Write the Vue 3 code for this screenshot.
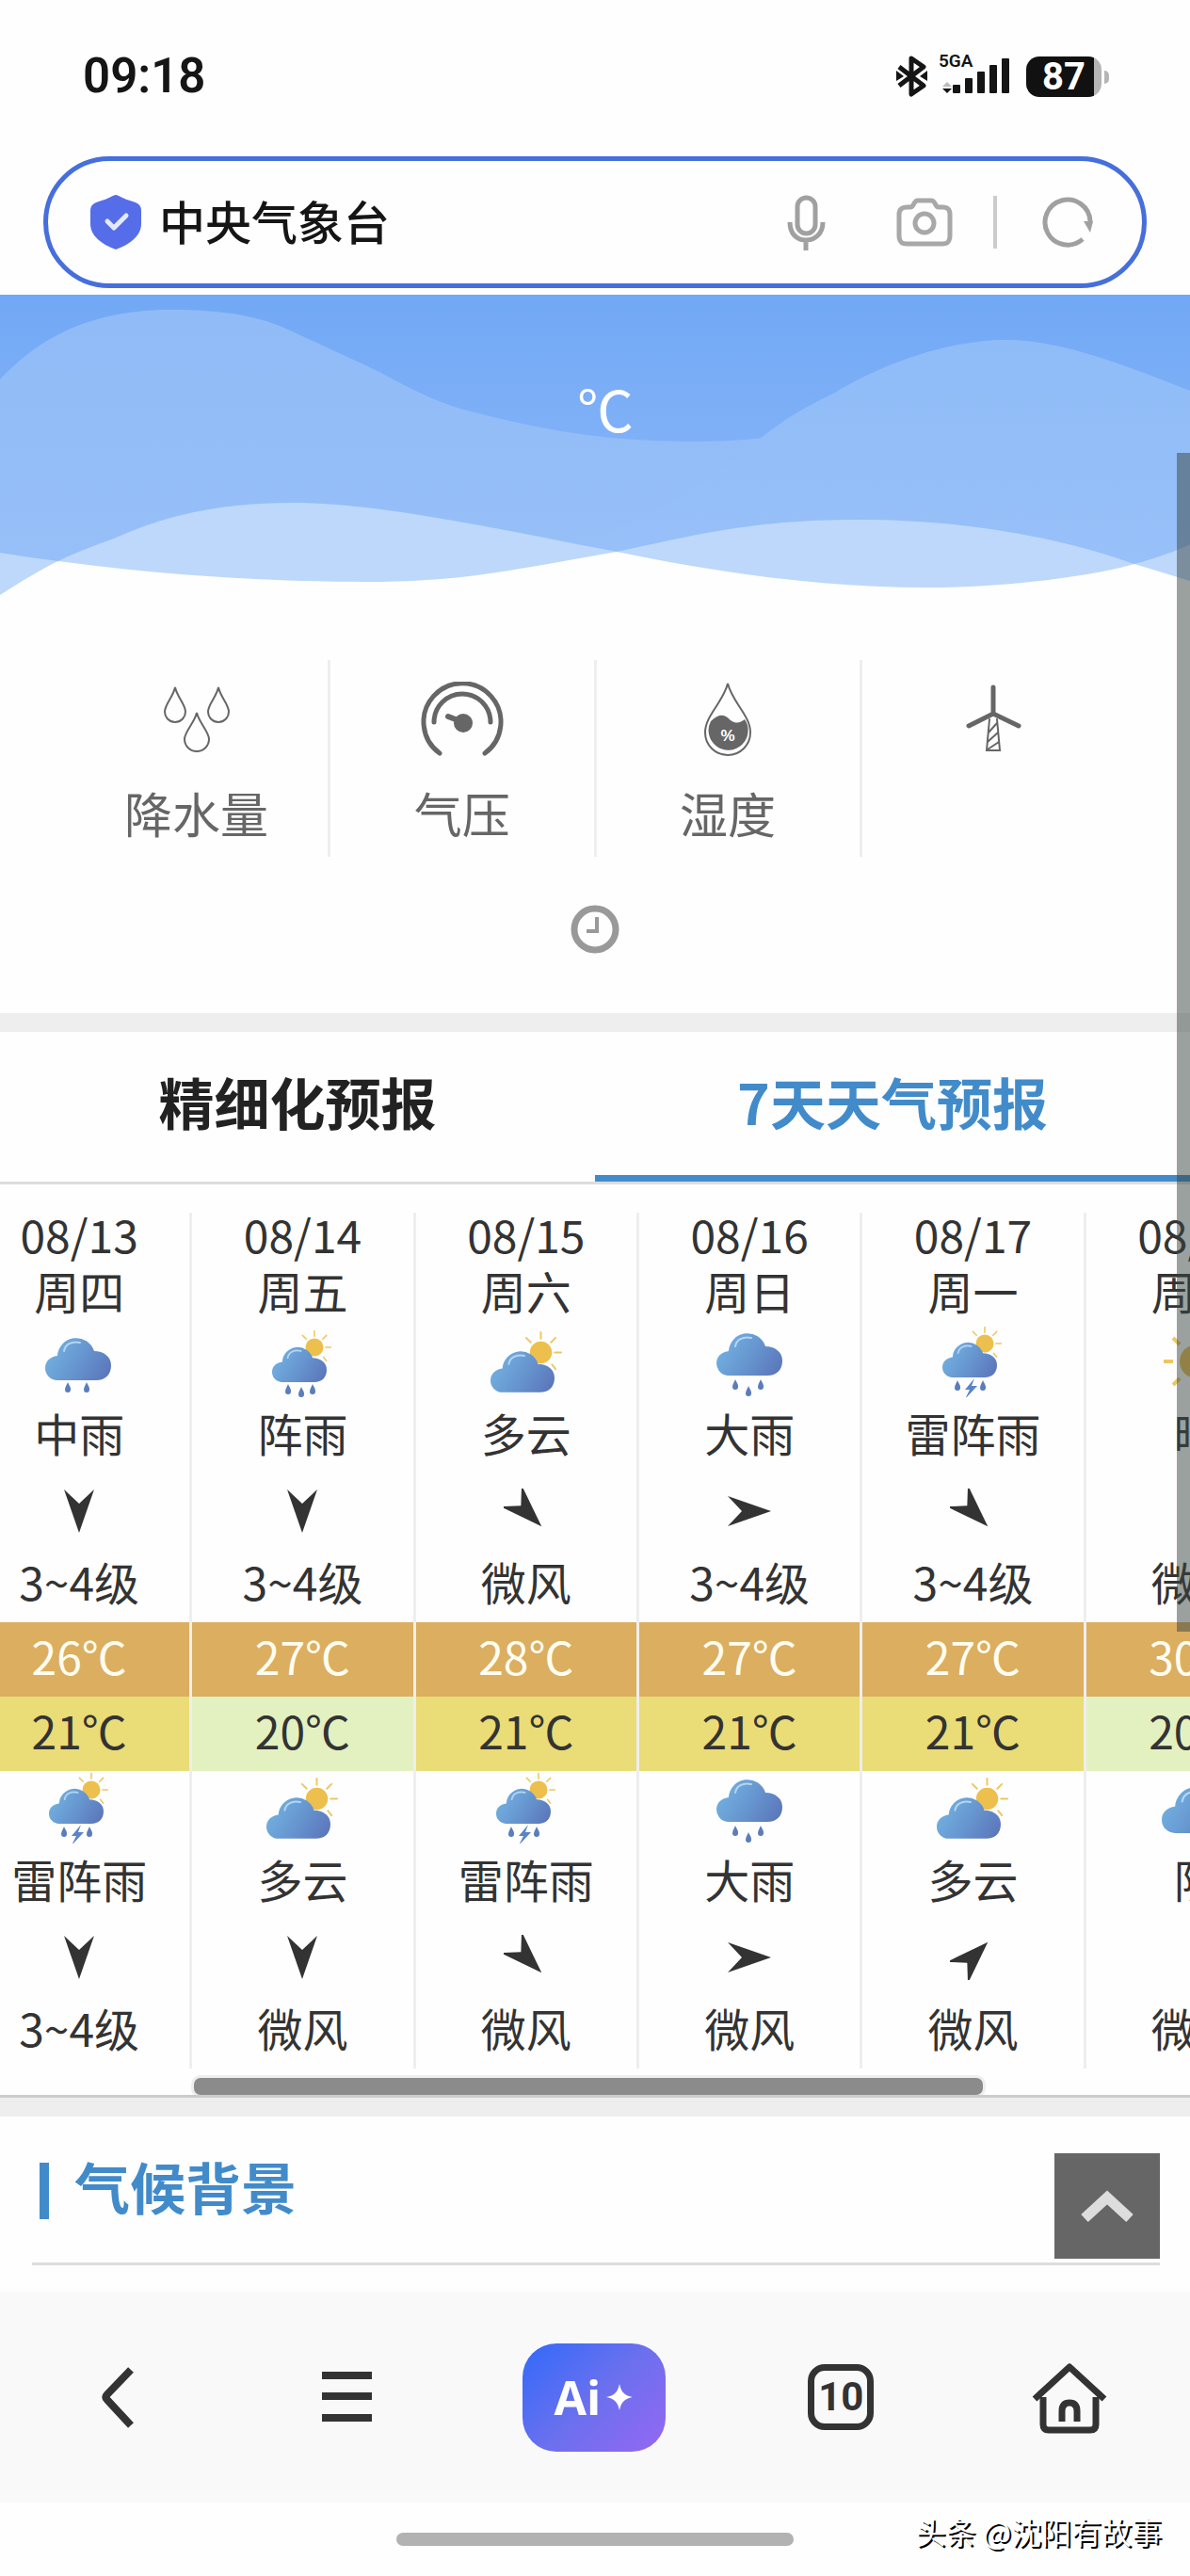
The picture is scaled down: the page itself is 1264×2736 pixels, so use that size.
<script setup>
import { ref } from 'vue'

const keyword = ref('中央气象台')
const activeTab = ref(1)
const tabs = ['精细化预报', '7天天气预报']

const metrics = [
	{ icon: 'drops', label: '降水量' },
	{ icon: 'gauge', label: '气压' },
	{ icon: 'humidity', label: '湿度' },
	{ icon: 'turbine', label: '' }
]

// wind arrows point down at 0 degrees
const days = [
	{
		date: '08/13',
		week: '周四',
		day: { icon: 'rain', text: '中雨', angle: 0, wind: '3~4级' },
		high: 26,
		low: 21,
		night: { icon: 'thunder', text: '雷阵雨', angle: 0, wind: '3~4级' }
	},
	{
		date: '08/14',
		week: '周五',
		day: { icon: 'shower', text: '阵雨', angle: 0, wind: '3~4级' },
		high: 27,
		low: 20,
		night: { icon: 'cloudy', text: '多云', angle: 0, wind: '微风' }
	},
	{
		date: '08/15',
		week: '周六',
		day: { icon: 'cloudy', text: '多云', angle: -45, wind: '微风' },
		high: 28,
		low: 21,
		night: { icon: 'thunder', text: '雷阵雨', angle: -45, wind: '微风' }
	},
	{
		date: '08/16',
		week: '周日',
		day: { icon: 'heavy', text: '大雨', angle: -90, wind: '3~4级' },
		high: 27,
		low: 21,
		night: { icon: 'heavy', text: '大雨', angle: -90, wind: '微风' }
	},
	{
		date: '08/17',
		week: '周一',
		day: { icon: 'thunder', text: '雷阵雨', angle: -45, wind: '3~4级' },
		high: 27,
		low: 21,
		night: { icon: 'cloudy', text: '多云', angle: -135, wind: '微风' }
	},
	{
		date: '08/18',
		week: '周二',
		day: { icon: 'sunny', text: '晴', angle: null, wind: '微风' },
		high: 30,
		low: 20,
		night: { icon: 'overcast', text: '阴', angle: null, wind: '微风' }
	}
]

const scrollTop = () => window.scrollTo(0, 0)
</script>

<template>
	<div class="page">
		<!-- shared shapes -->
		<svg class="defs" aria-hidden="true">
			<defs>
				<linearGradient id="cloudFill" x1="0" y1="0.3" x2="1" y2="0.7">
					<stop offset="0" stop-color="#73b2e2" />
					<stop offset="0.5" stop-color="#6797d0" />
					<stop offset="1" stop-color="#5c78bc" />
				</linearGradient>
				<symbol id="cloud" viewBox="0 0 70 47">
					<path
						d="M13 47A13 13 0 0 1 0 34C0 27 5 22 13 21A20 20 0 0 1 52 16C62 16 70 22 70 31C70 41 64 47 54 47Z"
						fill="url(#cloudFill)"
					/>
					<path
						d="M20 16C21 9 28 5 37 7"
						fill="none"
						stroke="#b5d6f2"
						stroke-width="2"
						stroke-linecap="round"
					/>
				</symbol>
				<symbol id="drop" viewBox="0 0 8 11">
					<path d="M4 0C5 3 7.500 5 7 8A3 3 0 0 1 1 8C1 5 3 3 4 0Z" fill="#5b7db9" />
				</symbol>
				<symbol id="sun" viewBox="0 0 48 48">
					<circle cx="24" cy="24" r="12" fill="#edbf4c" />
					<g stroke="#edc860" stroke-width="2" stroke-linecap="round">
						<path
							d="M24 2V9M40 8L35 13M46 24H39M40 42L36 37M8 8L13 13"
						/>
					</g>
				</symbol>
				<symbol id="rain" viewBox="0 0 80 80">
					<use href="#cloud" x="4" y="15" width="70" height="47" />
					<use href="#drop" x="24" y="64" width="8" height="11" />
					<use href="#drop" x="44" y="64" width="8" height="11" />
				</symbol>
				<symbol id="heavy" viewBox="0 0 80 80">
					<use href="#cloud" x="5" y="10" width="70" height="47" />
					<use href="#drop" x="21" y="61" width="8" height="11" />
					<use href="#drop" x="35" y="68" width="8" height="11" />
					<use href="#drop" x="48" y="61" width="8" height="11" />
				</symbol>
				<symbol id="shower" viewBox="0 0 80 80">
					<use href="#sun" x="34" y="8" width="38" height="38" />
					<use href="#cloud" x="8" y="25" width="58" height="39" />
					<use href="#drop" x="21" y="66" width="8" height="11" />
					<use href="#drop" x="35" y="69" width="8" height="11" />
					<use href="#drop" x="47" y="66" width="8" height="11" />
				</symbol>
				<symbol id="cloudy" viewBox="0 0 80 80">
					<use href="#sun" x="32" y="9" width="47" height="47" />
					<use href="#cloud" x="2" y="29" width="68" height="46" />
				</symbol>
				<symbol id="thunder" viewBox="0 0 80 80">
					<use href="#sun" x="34" y="4" width="38" height="38" />
					<use href="#cloud" x="8" y="20" width="58" height="39" />
					<use href="#drop" x="20" y="62" width="8" height="11" />
					<use href="#drop" x="47" y="62" width="8" height="11" />
					<path d="M42 60L32 72H37L32 82L45 68H39Z" fill="#5a84c8" />
				</symbol>
				<symbol id="sunny" viewBox="0 0 80 80">
					<circle cx="40" cy="42" r="18" fill="#edbf4c" />
					<path
						d="M40 6V16M40 68V78M5 42H15M65 42H75M15 17L22 24M58 60L65 67M65 17L58 24M22 60L15 67"
						stroke="#edc860"
						stroke-width="4"
					/>
				</symbol>
				<symbol id="overcast" viewBox="0 0 80 80">
					<use href="#cloud" x="3" y="18" width="76" height="51" />
				</symbol>
			</defs>
		</svg>

		<header class="status">
			<span class="time">09:18</span>
			<div class="status-icons">
				<svg width="34" height="44" viewBox="0 0 34 44">
					<path
						d="M3 12L29 32L16 41V3L29 12L3 32"
						fill="none"
						stroke="#151515"
						stroke-width="5"
						stroke-linejoin="round"
					/>
					<path d="M0 16L8 22L0 27ZM33 16L25 22L33 27Z" fill="#151515" />
				</svg>
				<div class="signal">
					<span>5GA</span>
					<svg width="74" height="38" viewBox="0 0 74 38">
						<path d="M3 30L8 25L13 30Z" fill="#bbb" />
						<path d="M3 32H13L8 37Z" fill="#151515" />
						<g fill="#151515">
							<rect x="14" y="28" width="8" height="9" rx="1" />
							<rect x="27" y="21" width="8" height="16" rx="1" />
							<rect x="40" y="14" width="8" height="23" rx="1" />
							<rect x="53" y="7" width="8" height="30" rx="1" />
							<rect x="66" y="0" width="8" height="37" rx="1" />
						</g>
					</svg>
				</div>
				<div class="battery"><span>87</span></div>
			</div>
		</header>

		<form class="search" @submit.prevent>
			<svg width="54" height="58" viewBox="0 0 54 58">
				<path
					d="M27 0C30 0 34 4 45 7C51 9 54 11 54 17V31C54 43 42 53 27 58C12 53 0 43 0 31V17C0 11 3 9 9 7C20 4 24 0 27 0Z"
					fill="#566de9"
				/>
				<path
					d="M18 28L25 35L38 22"
					fill="none"
					stroke="#e4e9ff"
					stroke-width="5"
					stroke-linecap="round"
					stroke-linejoin="round"
				/>
			</svg>
			<input v-model="keyword" type="text" aria-label="搜索" />
			<button class="mic" type="button" aria-label="语音">
				<svg width="60" height="60" viewBox="0 0 60 60" fill="none" stroke="#a0a0a0" stroke-width="5">
					<rect x="21" y="4" width="19" height="38" rx="9.500" />
					<path d="M13 30C13 42 20 49 30 49S48 42 48 30M30 49V60" />
				</svg>
			</button>
			<button class="camera" type="button" aria-label="拍照">
				<svg width="60" height="52" viewBox="0 0 60 52" fill="none" stroke="#a8a8a8" stroke-width="5">
					<path
						d="M12 10H15C19 10 18 3 23 3H37C42 3 41 10 45 10H49C55 10 57 13 57 18V40C57 46 55 49 49 49H11C5 49 3 46 3 40V18C3 13 5 10 12 10Z"
					/>
					<circle cx="30" cy="27" r="10" />
				</svg>
			</button>
			<i class="divider"></i>
			<button class="reload" type="button" aria-label="刷新">
				<svg width="62" height="56" viewBox="-2 1 62 56">
					<path
						d="M46 47A24 24 0 1 1 54 28"
						fill="none"
						stroke="#a0a0a0"
						stroke-width="5"
					/>
					<path d="M47 28H57L54 40Z" fill="#a0a0a0" />
				</svg>
			</button>
		</form>

		<section class="hero">
			<svg viewBox="0 313 1264 319" preserveAspectRatio="none">
				<defs>
					<linearGradient id="sky" x1="0" y1="0" x2="0" y2="1">
						<stop offset="0" stop-color="#71a8f5" />
						<stop offset="1" stop-color="#8fbaf9" />
					</linearGradient>
					<linearGradient id="swell" x1="0" y1="0" x2="0" y2="1">
						<stop offset="0" stop-color="#90bbf6" />
						<stop offset="1" stop-color="#98c0f9" />
					</linearGradient>
					<linearGradient id="hill" gradientUnits="userSpaceOnUse" x1="0" y1="361" x2="0" y2="600">
						<stop offset="0" stop-color="#8fbcf7" />
						<stop offset="1" stop-color="#98c0f9" />
					</linearGradient>
					<clipPath id="lower">
						<path
							d="M0 632C50 600 70 590 121 572C180 545 240 534 310 534C400 534 520 560 655 586C770 610 880 624 983 624C1070 624 1160 612 1205 599C1230 592 1250 585 1264 578V640H0Z"
						/>
					</clipPath>
				</defs>
				<rect y="313" width="1264" height="319" fill="url(#sky)" />
				<path
					d="M0 403C30 372 80 329 181 329C240 329 275 336 306 350C345 368 380 384 403 395C440 415 465 428 500 437C590 460 650 469 742 469C820 469 880 452 950 450V640H0Z"
					fill="url(#swell)"
				/>
				<path
					d="M645 565C700 545 760 505 806 467C835 443 860 430 887 417C940 385 1010 361 1068 361C1130 361 1200 390 1264 415V640H645Z"
					fill="url(#hill)"
				/>
				<path
					d="M0 632C50 600 70 590 121 572C180 545 240 534 310 534C400 534 520 560 655 586C770 610 880 624 983 624C1070 624 1160 612 1205 599C1230 592 1250 585 1264 578V640H0Z"
					fill="#bdd8fb"
				/>
				<path
					d="M0 587C130 608 270 618 387 618C500 618 560 602 655 586C740 568 800 552 911 552C1030 552 1130 572 1205 599L1264 617V640H0Z"
					fill="#bdd8fb"
				/>
				<path
					d="M0 587C130 608 270 618 387 618C500 618 560 602 655 586C740 568 800 552 911 552C1030 552 1130 572 1205 599L1264 617V640H0Z"
					fill="#fefefe"
					clip-path="url(#lower)"
				/>
			</svg>
			<p>℃</p>
		</section>

		<section class="now">
			<ul class="metrics">
				<li v-for="item in metrics" :key="item.icon">
					<svg
						v-if="item.icon === 'drops'"
						width="88"
						height="80"
						viewBox="0 0 88 80"
						fill="none"
						stroke="#666"
						stroke-width="2"
					>
						<path d="M21 6C23 16 32 24 32 32A11 11 0 0 1 10 32C10 24 19 16 21 6Z" />
						<path d="M67 6C69 16 78 24 78 32A11 11 0 0 1 56 32C56 24 65 16 67 6Z" />
						<path d="M44 33C46 43 57 53 57 61A13 13 0 0 1 31 61C31 53 42 43 44 33Z" />
					</svg>
					<svg
						v-else-if="item.icon === 'gauge'"
						width="88"
						height="80"
						viewBox="0 0 88 80"
						fill="none"
						stroke="#666"
						stroke-width="5"
						stroke-linecap="round"
					>
						<path d="M20 76A41 41 0 1 1 68 76" />
						<path d="M14 43A30 30 0 0 1 74 43" />
						<circle cx="45" cy="44" r="10" fill="#666" stroke="none" />
						<path d="M29 37L42 42" stroke-width="6" />
					</svg>
					<svg v-else-if="item.icon === 'humidity'" width="88" height="80" viewBox="0 0 88 80">
						<path
							d="M44 2C49 22 68 36 68 54A24 24 0 0 1 20 54C20 36 39 22 44 2Z"
							fill="none"
							stroke="#666"
							stroke-width="2"
						/>
						<path
							d="M26 42C36 32 42 36 47 41C53 45 57 44 62 40A21 21 0 1 1 26 42Z"
							fill="#666"
						/>
						<text x="44" y="63" text-anchor="middle">%</text>
					</svg>
					<svg
						v-else
						width="88"
						height="80"
						viewBox="0 0 88 80"
						fill="none"
						stroke="#666"
						stroke-linecap="round"
					>
						<path d="M44 6V34L18 47M44 34L71 47" stroke-width="5" />
						<path
							d="M40 40L37 73H51L48 40M39 54L48 44M38 64L49 54M38 72L50 64"
							stroke-width="2"
						/>
					</svg>
					<span>{{ item.label }}</span>
				</li>
			</ul>
			<svg class="clock" width="52" height="52" viewBox="0 0 52 52" fill="none" stroke="#999">
				<circle cx="26" cy="26" r="22" stroke-width="7" />
				<path d="M28 13V28H17" stroke-width="4" />
			</svg>
		</section>

		<nav class="tabs">
			<button
				v-for="(tab, i) in tabs"
				:key="tab"
				type="button"
				:class="{ active: activeTab === i }"
				@click="activeTab = i"
			>
				{{ tab }}
			</button>
		</nav>

		<section class="forecast">
			<table>
				<thead>
					<tr>
						<th v-for="d in days" :key="d.date" scope="col">
							<span>{{ d.date }}</span>
							<span>{{ d.week }}</span>
						</th>
					</tr>
				</thead>
				<tbody v-for="part in ['day', 'night']" :key="part">
					<tr>
						<td v-for="d in days" :key="d.date">
							<svg class="weather" width="80" height="80"><use :href="'#' + d[part].icon" /></svg>
						</td>
					</tr>
					<tr>
						<td v-for="d in days" :key="d.date">{{ d[part].text }}</td>
					</tr>
					<tr>
						<td v-for="d in days" :key="d.date">
							<svg v-if="d[part].angle !== null" class="arrow" width="48" height="48" viewBox="0 0 48 48">
								<path
									d="M8 1L24 16L40 1L24 47Z"
									fill="#333"
									:transform="`rotate(${d[part].angle} 24 24)`"
								/>
							</svg>
						</td>
					</tr>
					<tr>
						<td v-for="d in days" :key="d.date">{{ d[part].wind }}</td>
					</tr>
					<template v-if="part === 'day'">
						<tr class="high">
							<td v-for="d in days" :key="d.date">{{ d.high }}℃</td>
						</tr>
						<tr class="low">
							<td v-for="d in days" :key="d.date" :class="{ cool: d.low <= 20 }">
								{{ d.low }}℃
							</td>
						</tr>
					</template>
				</tbody>
			</table>
			<div class="thumb"></div>
		</section>

		<section class="climate">
			<h2>气候背景</h2>
			<button type="button" aria-label="返回顶部" @click="scrollTop">
				<svg width="60" height="40" viewBox="0 0 60 40">
					<path d="M6 33L30 11L54 33" fill="none" stroke="#ddd" stroke-width="11" />
				</svg>
			</button>
		</section>

		<nav class="toolbar">
			<button type="button" aria-label="后退">
				<svg width="80" height="80" viewBox="0 0 80 80" fill="none" stroke="#333" stroke-width="8">
					<path d="M54 11L29 37Q26 40 29 43L54 70" />
				</svg>
			</button>
			<button type="button" aria-label="菜单">
				<svg width="80" height="80" viewBox="0 0 80 80" fill="none" stroke="#333" stroke-width="8">
					<path d="M14 17H67M14 39H67M14 62H67" />
				</svg>
			</button>
			<button class="ai" type="button">
				<span>Ai</span>
				<svg width="28" height="28" viewBox="0 0 28 28">
					<path d="M14 0C16 9 19 12 28 14C19 16 16 19 14 28C12 19 9 16 0 14C9 12 12 9 14 0Z" fill="#fff" />
				</svg>
			</button>
			<button type="button" aria-label="窗口">
				<span class="count">10</span>
			</button>
			<button type="button" aria-label="主页">
				<svg width="80" height="80" viewBox="0 0 80 80" fill="none" stroke="#333" stroke-width="7">
					<path d="M3 42L40 8L77 42" stroke-linejoin="round" />
					<path d="M12 40V69Q12 75 18 75H62Q68 75 68 69V40" />
					<path d="M32 66V55Q32 46 40 46Q48 46 48 55V66" />
				</svg>
			</button>
		</nav>

		<footer>
			<div class="indicator"></div>
			<span class="mark">头条 @沈阳有故事</span>
		</footer>
		<div class="page-scroll"></div>
	</div>
</template>

<style>
body {
	margin: 0;
	background: #fefefe;
}
</style>

<style scoped>
.page {
	position: relative;
	overflow: hidden;
	font-family: 'Noto Sans CJK SC', sans-serif;
	color: #333;
}
.defs {
	position: absolute;
	width: 0;
	height: 0;
}
svg {
	display: block;
	flex: none;
}
button {
	padding: 0;
	border: 0;
	background: none;
	font-family: inherit;
	color: inherit;
	cursor: pointer;
}
.status {
	display: flex;
	justify-content: space-between;
	align-items: center;
	height: 106px;
	padding: 28px 88px 32px;
	color: #151515;
}
.time {
	font: 600 51px/60px Roboto, sans-serif;
}
.status-icons {
	display: flex;
	align-items: center;
	gap: 12px;
}
.signal {
	position: relative;
}
.signal span {
	position: absolute;
	left: -1px;
	top: -7px;
	font: 600 19px/19px Roboto, sans-serif;
}
.battery {
	position: relative;
	width: 80px;
	height: 43px;
	margin: 0 6px;
	border-radius: 14px;
	background: linear-gradient(90deg, #111 72px, #b5b5b5 72px);
	text-align: center;
	color: #fff;
}
.battery::after {
	content: '';
	position: absolute;
	right: -8px;
	top: 15px;
	width: 5px;
	height: 14px;
	border-radius: 0 7px 7px 0;
	background: #b5b5b5;
}
.battery span {
	font: 700 40px/43px Roboto, sans-serif;
}
.search {
	display: flex;
	align-items: center;
	height: 130px;
	margin: 0 46px 7px;
	padding: 0 49px 0 45px;
	border: 5px solid #466fdc;
	border-radius: 70px;
}
.search input {
	flex: 1;
	min-width: 0;
	margin-left: 19px;
	padding: 0 0 4px;
	border: 0;
	outline: none;
	background: none;
	font: 500 49px/72px 'Noto Sans CJK SC', sans-serif;
	color: #151515;
}
.camera {
	margin-left: 66px;
}
.divider {
	width: 4px;
	height: 56px;
	margin: 0 43px;
	background: #ccc;
}
.hero {
	position: relative;
	height: 319px;
}
.hero svg {
	position: absolute;
	width: 100%;
	height: 100%;
}
.hero p {
	position: relative;
	margin: 0;
	padding: 80px 0 0 22px;
	font-size: 60px;
	line-height: 80px;
	text-align: center;
	color: #fff;
}
.now {
	padding: 69px 69px 63px;
	border-bottom: 20px solid #eee;
}
.metrics {
	display: flex;
	margin: 0 0 51px;
	padding: 0;
	list-style: none;
}
.metrics li {
	flex: 1;
	display: flex;
	flex-direction: column;
	align-items: center;
	gap: 29px;
	padding: 23px 0 17px;
	border-right: 3px solid #eee;
	font-size: 51px;
	line-height: 60px;
	color: #666;
}
.metrics li:last-child {
	border-right: 0;
}
.metrics span {
	min-height: 60px;
}
.metrics text {
	font: 700 17px 'Liberation Sans', sans-serif;
	fill: #fff;
}
.clock {
	margin: 0 auto;
}
.tabs {
	display: flex;
	border-bottom: 3px solid #ddd;
}
.tabs button {
	flex: 1;
	padding: 38px 0 42px;
	border-bottom: 7px solid transparent;
	font-size: 59px;
	line-height: 72px;
	font-weight: 700;
	color: #222;
}
.tabs .active {
	border-color: #428bca;
	color: #428bca;
}
.forecast {
	padding-top: 30px;
	border-bottom: 3px solid #ccc;
	overflow: hidden;
}
table {
	width: 1424px;
	margin-left: -33px;
	border-collapse: separate;
	border-spacing: 0;
	table-layout: fixed;
	font-size: 48px;
	line-height: 60px;
	text-align: center;
}
th {
	height: 119px;
	padding: 0;
	border-right: 3px solid #eee;
	font-weight: 400;
	vertical-align: top;
}
th span {
	display: block;
	margin-bottom: 16px;
	line-height: 44px;
}
th span:last-child {
	margin: 0;
}
td {
	box-sizing: border-box;
	height: 79px;
	padding: 0 0 10px;
	border-right: 3px solid #eee;
}
td svg {
	margin: 0 auto;
}
td .weather {
	margin: -3px auto -8px;
}
td .arrow {
	margin-bottom: -10px;
}
.high td {
	background: #dbae60;
	color: #fffdf0;
}
.low td {
	background: #eadc76;
}
.low .cool {
	background: #e3f1c1;
}
.thumb {
	width: 66.3%;
	height: 18px;
	margin: 10px 0 0 16.3%;
	border-radius: 7px;
	background: #8b8b8b;
	box-shadow: 0 0 0 3px #eee;
}
.climate {
	position: relative;
	display: flex;
	justify-content: space-between;
	align-items: flex-start;
	padding: 39px 0 4px 8px;
	margin: 20px 32px 28px 34px;
	border-bottom: 3px solid #ddd;
}
.climate::before {
	content: '';
	width: 10px;
	height: 60px;
	margin: 10px 27px 0 0;
	background: #428bca;
}
.climate::after {
	content: '';
	position: absolute;
	left: -34px;
	right: -32px;
	top: -20px;
	height: 20px;
	background: #eee;
}
.climate h2 {
	flex: 1;
	margin: 0;
	font-size: 59px;
	line-height: 70px;
	color: #428bca;
}
.climate button {
	display: flex;
	align-items: center;
	justify-content: center;
	width: 112px;
	height: 112px;
	background: #666;
}
.toolbar {
	display: flex;
	justify-content: space-between;
	align-items: center;
	height: 224px;
	padding: 0 88px 0 85px;
	background: #f9f9f9;
}
.ai {
	display: flex;
	align-items: center;
	justify-content: center;
	gap: 6px;
	width: 152px;
	height: 115px;
	margin: 0 -16px;
	border-radius: 36px;
	background: linear-gradient(135deg, #376af9 5%, #6a70ee 50%, #9168f2 95%);
	font: 700 50px/56px 'Open Sans', sans-serif;
	color: #fff;
}
.count {
	display: block;
	box-sizing: border-box;
	width: 70px;
	height: 70px;
	margin: 0 5px;
	border: 7px solid #333;
	border-radius: 18px;
	font: 700 42px/56px Roboto, sans-serif;
}
footer {
	position: relative;
	height: 46px;
	padding-top: 32px;
}
.indicator {
	width: 33.4%;
	height: 14px;
	margin: 0 auto;
	border-radius: 7px;
	background: #b2b2b2;
}
.mark {
	position: absolute;
	right: 30px;
	top: 8px;
	font-size: 32px;
	line-height: 44px;
	color: #fff;
	text-shadow: 2px 2px 0 #000;
}
.page-scroll {
	position: absolute;
	right: 0;
	top: 481px;
	width: 14px;
	height: 1252px;
	background: rgba(56, 68, 64, 0.5);
}
</style>
